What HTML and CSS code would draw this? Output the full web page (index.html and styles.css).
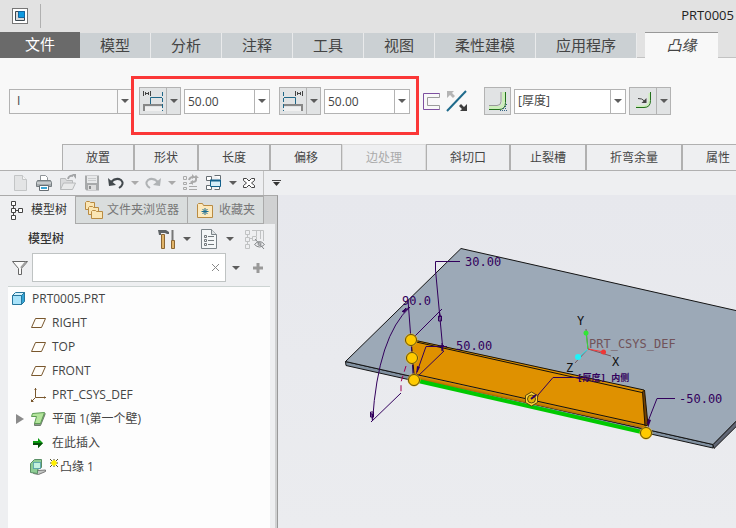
FILE: index.html
```html
<!DOCTYPE html>
<html lang="zh-CN">
<head>
<meta charset="utf-8">
<title>PRT0005</title>
<link rel="stylesheet" href="styles.css">
</head>
<body>
<header class="titlebar">
  <button class="app-btn" aria-label="窗口">
    <svg width="16" height="16" viewBox="0 0 16 16"><path d="M3.5 3.5h9v9h-9z" fill="#d8dadb" stroke="#3c4850"/><path d="M6.500 3.500h6v6h-6z" fill="#0d9ae0" stroke="#1465a0"/></svg>
  </button>
  <span class="title-sep"></span>
  <span class="doc-title">PRT0005</span>
</header>

<nav class="tabs">
  <button class="tab file">文件</button>
  <button class="tab">模型</button>
  <button class="tab">分析</button>
  <button class="tab">注释</button>
  <button class="tab">工具</button>
  <button class="tab">视图</button>
  <button class="tab wide">柔性建模</button>
  <button class="tab wide">应用程序</button>
  <span class="tab-gap"></span>
  <button class="tab active">凸缘</button>
  <span class="tab-rest"></span>
</nav>

<section class="ribbon">
  <div class="controls">
    <div class="combo profile"><select aria-label="轮廓"><option>I</option></select><i class="caret"></i></div>
    <div class="ends">
      <div class="field">
        <div class="split">
          <button aria-label="第一端"><svg width="26" height="26" viewBox="0 0 26 26"><path d="M3.500 3v5M10.500 3v5M5 5.500h4M5.500 4v3M8.500 4v3" stroke="#444" fill="none"/><path d="M22 9.500H10.500V16" stroke="#1f6788" fill="none"/><path d="M22.500 4v19" stroke="#1f6788" stroke-dasharray="4 2"/><path d="M5 19h17v4H5z" fill="#f0f0f0"/><path d="M4 23v-6h18" stroke="#878787" stroke-width="2" fill="none"/></svg></button>
          <button class="more" aria-label="更多"><i class="caret"></i></button>
        </div>
        <div class="combo num"><input aria-label="第一端值" value="50.00"><button aria-label="选择"><i class="caret"></i></button></div>
      </div>
      <div class="field">
        <div class="split">
          <button aria-label="第二端"><svg width="26" height="26" viewBox="0 0 26 26"><path d="M15.500 3v5M22.500 3v5M17 5.500h4M17.500 4v3M20.500 4v3" stroke="#444" fill="none"/><path d="M4 9.500h11.500V16" stroke="#1f6788" fill="none"/><path d="M3.500 4v19" stroke="#1f6788" stroke-dasharray="4 2"/><path d="M4 19h17v4H4z" fill="#f0f0f0"/><path d="M4 17h18v6" stroke="#878787" stroke-width="2" fill="none"/></svg></button>
          <button class="more" aria-label="更多"><i class="caret"></i></button>
        </div>
        <div class="combo num"><input aria-label="第二端值" value="50.00"><button aria-label="选择"><i class="caret"></i></button></div>
      </div>
    </div>
    <div class="icons">
      <button class="plain" aria-label="偏移边"><svg width="18" height="20" viewBox="0 0 18 20"><path d="M16.500 4V2.500H.5v16h16V17" fill="none" stroke="#7d50a0"/><path d="M16.500 3v3.500H4.500v8h12V18" fill="none" stroke="#9b9b9b"/></svg></button>
      <button class="plain" aria-label="反向"><svg width="22" height="22" viewBox="0 0 22 22"><path d="M1 21L20 1" stroke="#1f6b8c" stroke-width="2"/><path d="M1 1h7L6 3l3 3-2 2-3-3-3 3z" fill="#b5b5b5"/><path d="M21 21h-7l2-2-3-3 2-2 3 3 3-3z" fill="#3e3e3e"/></svg></button>
    </div>
    <button class="square" aria-label="厚度侧"><svg width="26" height="26" viewBox="0 0 26 26"><path d="M4 17.500h8q4 0 4-4V4" stroke="#999" fill="none"/><path d="M4 19.500h9q5.500 0 5.500-6V4" stroke="#cdeebb" stroke-width="3" fill="none"/><path d="M4 21.500h10q6.500 0 6.500-7V4" stroke="#23701c" fill="none"/><path d="M15 22.500h7M18 20.500h4M20 18.500h2M21 16.500h1" stroke="#356485" stroke-dasharray="1 1"/></svg></button>
    <div class="combo thick"><select aria-label="厚度"><option>[厚度]</option></select><i class="caret"></i></div>
    <div class="split">
      <button aria-label="折弯半径"><svg width="26" height="26" viewBox="0 0 26 26"><path d="M6 18.500h7q6.500 0 6.500-7V5" stroke="#cdeebb" stroke-width="2" fill="none"/><path d="M6 19.500h8q6.500 0 6.500-7V4" stroke="#23701c" fill="none"/><path d="M8 10.500q4-.5 7 3" stroke="#444" fill="none"/><path d="M16.500 10v5h-5z" fill="#444"/></svg></button>
      <button class="more" aria-label="更多"><i class="caret"></i></button>
    </div>
  </div>
  <nav class="panels">
    <button class="w72">放置</button><button class="w64">形状</button><button class="w72">长度</button><button class="w72">偏移</button><button class="w84" disabled>边处理</button><button class="w84">斜切口</button><button class="w76">止裂槽</button><button class="w96">折弯余量</button><button class="w72">属性</button>
  </nav>
</section>

<div class="quickbar">
  <button aria-label="新建"><svg width="18" height="18" viewBox="0 0 18 18"><path d="M3.500 1.500h8l4 4v11h-12z" fill="#e3e4e5" stroke="#c3c5c6"/><path d="M11.500 1.500v4h4" fill="#f5f5f5" stroke="#c3c5c6"/></svg></button>
  <button aria-label="打印"><svg width="18" height="18" viewBox="0 0 18 18"><path d="M5.500 6V1.500h5l2 2V6" fill="#fff" stroke="#8f9498"/><path d="M2.500 6.500h13l1 2v4h-15v-4z" fill="#a5abae" stroke="#777e82"/><path d="M2 9h14" stroke="#e7e9ea"/><path d="M4.500 11.500h9v5h-9z" fill="#fff" stroke="#666d73"/><path d="M6 13h6v2H6z" fill="#3ba4d3"/></svg></button>
  <button aria-label="打开"><svg width="18" height="18" viewBox="0 0 18 18"><path d="M1.500 15.500v-11h5l1 2h6v3" fill="#d9dadb" stroke="#b8babb"/><path d="M1.500 15.500l3-6.500h12l-3 6.500z" fill="#e8e9e9" stroke="#b8babb"/><path d="M9 5q1-4 5-3" stroke="#a2a4a6" stroke-width="2" fill="none"/><path d="M13 0h4v5z" fill="#a2a4a6"/></svg></button>
  <button aria-label="保存"><svg width="18" height="18" viewBox="0 0 18 18"><path d="M2 1.500h14v15H3.500L2 15z" fill="#a8aaab"/><path d="M4 2h10v7H4z" fill="#e8e9ea"/><path d="M5 11h8v5H5z" fill="#ddd"/><path d="M6 12h2v3H6z" fill="#8b8d8e"/><path d="M5 4.500h8M5 6.500h8" stroke="#c9cbcc"/></svg></button>
  <button aria-label="撤销"><svg width="18" height="18" viewBox="0 0 18 18"><path d="M4 8q5-5 10-2 4 4-2 8" stroke="#43494d" stroke-width="2" fill="none"/><path d="M1 4l1 8 7-1z" fill="#43494d"/></svg></button>
  <button class="drop" aria-label="撤销列表"><i class="caret dim"></i></button>
  <button aria-label="重做"><svg width="18" height="18" viewBox="0 0 18 18"><path d="M14 8q-5-5-10-2-4 4 2 8" stroke="#b0b3b5" stroke-width="2" fill="none"/><path d="M17 4l-1 8-7-1z" fill="#b0b3b5"/></svg></button>
  <button class="drop" aria-label="重做列表"><i class="caret dim"></i></button>
  <button aria-label="重新生成"><svg width="18" height="18" viewBox="0 0 18 18" fill="none" stroke="#aaa"><path d="M2.500 2.500h3v3h-3zM2.500 8.500h3v2h-3zM2.500 13.500h3v2h-3zM8 12.500h8M8 15.500h8M8 9.500h3"/><path d="M8 6q1-3 4-3M15 3v3q0 2-4 2" stroke-width="2"/><path d="M11 0l3 3-3 2zM12 6v5l-3-3zM12 4l3-3 3 3z" fill="#aaa" stroke="none"/></svg></button>
  <button aria-label="窗口"><svg width="18" height="18" viewBox="0 0 18 18"><path d="M1.500 2.500h5v4h-5zM9.500 1.500h6v4M1.500 11.500h5v4h-5zM9.500 15.500h5v-3" fill="#fff" stroke="#666d72"/><path d="M5.500 6.500h10v6h-10z" fill="#d5edf8" stroke="#13618c"/><path d="M5 6.500h11" stroke="#13618c" stroke-width="2"/></svg></button>
  <button class="drop" aria-label="窗口列表"><i class="caret"></i></button>
  <button aria-label="关闭"><svg width="14" height="14" viewBox="0 0 14 14"><path d="M1.500 2.500h3L7 5l2.500-2.500h3v2L9.500 7l3 2.500v2h-3L7 9l-2.500 2.500h-3v-2l3-2.500-3-2.500z" fill="#fff" stroke="#444"/></svg></button>
  <span class="bar-sep"></span>
  <button class="drop" aria-label="自定义"><svg width="9" height="7" viewBox="0 0 9 7"><path d="M0 .5h9" stroke="#444"/><path d="M1 2h7L4.500 6z" fill="#333"/></svg></button>
</div>

<main class="work">
  <aside class="side">
    <nav class="side-tabs">
      <button class="side-tab on"><svg width="14" height="20" viewBox="0 0 14 20" fill="#fff" stroke="#444"><path d="M1.500 1.500h4v4h-4zM1.500 8.500h4v4h-4zM1.500 15.500h4v4h-4zM8.500 8.500h4v4h-4zM3.500 5.500v3M3.500 12.500v3M5.500 10.500h3"/></svg>模型树</button>
      <button class="side-tab files"><svg width="20" height="20" viewBox="0 0 20 20" fill="#fbe6b4" stroke="#b98b42"><path d="M1.500 9.500v-7l1-1h3l1 1h4v7z"/><path d="M4.500 14.500v-7l1-1h3l1 1h5v7z"/><path d="M7.500 18.500v-7l1-1h3l1 1h6v7z"/></svg>文件夹浏览器</button>
      <button class="side-tab fav"><svg width="18" height="16" viewBox="0 0 18 16"><path d="M1.500 15.500v-13l1-1h4l1 2h9v12z" fill="#fce9bd" stroke="#b98b42"/><path d="M9 6v7M5.500 9.500h7M6.500 7l5 5M11.500 7l-5 5" stroke="#1a6c91"/></svg>收藏夹</button>
    </nav>
    <div class="side-body">
      <div class="tree-head">
        <h2>模型树</h2>
        <button aria-label="设置"><svg width="18" height="20" viewBox="0 0 18 20"><path d="M0 1h8l3 2v2H9L7 4H3v2H1z" fill="#5e6366"/><path d="M3.500 5.500h3v14h-3z" fill="#e0b469" stroke="#8b6633"/><path d="M14.500 1v10" stroke="#777" stroke-width="2"/><path d="M13.500 11.500h3v8h-3z" fill="#e0b469" stroke="#8b6633"/></svg></button>
        <button class="drop" aria-label="设置列表"><i class="caret"></i></button>
        <button aria-label="显示"><svg width="18" height="20" viewBox="0 0 18 20"><path d="M.5 .5h10l5 5v14H.5z" fill="#f4f7f8" stroke="#7b8489"/><path d="M10.500 .5v5h5" fill="#dde1e3" stroke="#7b8489"/><path d="M3.500 6.500h2v2h-2zM3.500 10.500h2v2h-2zM3.500 14.500h2v2h-2zM7 7.500h6M7 11.500h6M7 15.500h6" fill="none" stroke="#72797d"/></svg></button>
        <button class="drop" aria-label="显示列表"><i class="caret"></i></button>
        <button aria-label="隐藏"><svg width="22" height="20" viewBox="0 0 22 20" fill="none" stroke="#c0c2c3"><path d="M1.500 1.500h4v4h-4zM1.500 8.500h4v4h-4zM1.500 15.500h4v4h-4zM8.500 7.500h4v4h-4zM3.500 5.500v3M3.500 12.500v3M5.500 9.500h3M8 1.500h11.500V12M12.500 2v5M16.500 2v8"/><path d="M10.500 15.500q5-6 10 0-5 5-10 0zM11 10l9 10" stroke="#85888a"/><circle cx="15.500" cy="15" r="1.500" stroke="#85888a"/></svg></button>
      </div>
      <div class="search">
        <button aria-label="过滤"><svg width="18" height="16" viewBox="0 0 18 16"><path d="M1.500 1.500h15l-6 7v6h-3v-6z" fill="#fafafa" stroke="#666"/><path d="M10 8l5-6" stroke="#a0a0a0" stroke-width="2"/></svg></button>
        <div class="search-box"><input aria-label="搜索"><button aria-label="清除"><svg width="9" height="9" viewBox="0 0 9 9"><path d="M1 1l7 7M8 1L1 8" stroke="#888"/></svg></button></div>
        <button class="drop" aria-label="搜索选项"><i class="caret"></i></button>
        <button aria-label="添加"><svg width="12" height="12" viewBox="0 0 12 12"><path d="M6 1v10M1 6h10" stroke="#999" stroke-width="3"/></svg></button>
      </div>
      <ul class="tree">
        <li class="root"><svg width="16" height="16" viewBox="0 0 16 16"><path d="M1.500 4.500h9v9h-9z" fill="#a9e3fa" stroke="#28779d"/><path d="M1.500 4.500l3-3h9l-3 3z" fill="#d5f3fd" stroke="#28779d"/><path d="M10.500 4.500l3-3v9l-3 3z" fill="#35a5d6" stroke="#28779d"/></svg>PRT0005.PRT</li>
        <li><svg width="16" height="16" viewBox="0 0 16 16"><path d="M5.500 3.500h10l-4 9h-10z" fill="#fffdf9" stroke="#79572d"/></svg>RIGHT</li>
        <li><svg width="16" height="16" viewBox="0 0 16 16"><path d="M5.500 3.500h10l-4 9h-10z" fill="#fffdf9" stroke="#79572d"/></svg>TOP</li>
        <li><svg width="16" height="16" viewBox="0 0 16 16"><path d="M5.500 3.500h10l-4 9h-10z" fill="#fffdf9" stroke="#79572d"/></svg>FRONT</li>
        <li><svg width="16" height="16" viewBox="0 0 16 16"><path d="M5.500 1v9.500H16M5.500 10.500L1 15M4.500 2.500h2M14.500 9.500v2M1.500 12.500v2h2" fill="none" stroke="#79572d"/></svg>PRT_CSYS_DEF</li>
        <li class="branch"><button class="expand" aria-label="展开"></button><svg width="16" height="16" viewBox="0 0 16 16"><path d="M4.500 12v2.500h6l4.500-11V2" fill="#8d9a8c" stroke="#6f7d6e"/><path d="M1.500 5.500l1-3 12-1-4 11h-6l2-7z" fill="#b3e49b" stroke="#5d9d55"/></svg>平面 1(第一个壁)</li>
        <li><svg width="16" height="16" viewBox="0 0 16 16"><path d="M3 6h5V3l5 5-5 5v-3H3z" fill="#0a9a10"/><path d="M3 8h10l-5 5v-3H3z" fill="#064d09"/></svg>在此插入</li>
        <li class="fresh"><svg width="16" height="16" viewBox="0 0 16 16"><path d="M3 10.500l5 1 7.500-.5v1.500l-7 3-5-1z" fill="#c4c7c4" stroke="#777"/><path d="M.5 4.500l4-4h7v8l-4 2v4l-7-1z" fill="#8fce95" stroke="#5a8f66"/><path d="M3.500 3.500h7v6h-7z" fill="#c4f2df" stroke="#1a75a2" stroke-dasharray="1 1"/></svg><span class="new"><svg width="8" height="8" viewBox="0 0 8 8"><path d="M0 0l8 8M8 0L0 8M4 0v8M0 4h8" stroke="#55512a"/><path d="M1 4h6M4 1v6M2 2l4 4M6 2L2 6" stroke="#ffef00" stroke-width="1.500"/></svg></span>凸缘 1</li>
      </ul>
    </div>
  </aside>

  <section class="view">
    <svg class="scene" viewBox="278 195 458 333" preserveAspectRatio="xMinYMin slice" role="img" aria-label="凸缘模型">
      <defs>
        <linearGradient id="bend" gradientUnits="userSpaceOnUse" x1="530" y1="400" x2="528.700" y2="406"><stop offset="0" stop-color="#df9100"/><stop offset="1" stop-color="#8a4f05"/></linearGradient>
        <g id="grip"><circle r="6" fill="#f0be22" stroke="#f0be22"/><circle r="5.500" fill="#ffca00" stroke="#5d4c10"/></g>
      </defs>
      <g stroke="#151515" stroke-width="1" stroke-linejoin="round">
        <path d="M345.500 361.500L713 444.500V448L346 365.500z" fill="#8090a0"/>
        <path d="M713 444.500L760 397V403L714 448.500z" fill="#606674"/>
        <path d="M461 248.500L780 320.500 760 397 713 444.500 345.500 361.500z" fill="#9ca9b7"/>
      </g>
      <path d="M414 374.500L646 425l1 4-232-50z" fill="url(#bend)"/>
      <path d="M411 339L644 390l1 35-231-51z" fill="#df9100"/>
      <path d="M642.500 392l2-2 3.500 35-3 1z" fill="#734305" stroke="#221400"/>
      <path d="M411 339.500L644 390M414 341.500L642 392.500M414 374L645 425M411 339l3 35" fill="none" stroke="#15110a"/>
      <path d="M416 380.500L646 433" stroke="#00c900" stroke-width="4"/>
      <g fill="none" stroke="#32005c">
        <path d="M460 261.500H435.500V270L443 351M412 339l30-30M416 378l28-27M410 307Q378 336 372.500 421M371 422l30-29M408 300l3 40 2 34M447 346.500H426L417 372M538 395l15-17.500h33M647 424l10-25.500h18"/>
        <path d="M438.500 316h3v5h-3zM370.500 412h3v5h-3zM402 312l4-4M442 343v8M439 346h5"/>
      </g>
      <path d="M439 317l1-5 1 5zM442 352l-1-7h3zM371 413l1 8 2-7zM409 307l-7 4 2 2zM416 375l1-9 3 1zM648 428l0-9 3 1zM533 399l3-5 3 2z" fill="#32005c"/>
      <path d="M406 366l-5 16v12" stroke="#a00055" stroke-dasharray="6 4" fill="none"/>
      <use href="#grip" x="411" y="340"/><use href="#grip" x="412" y="358"/><use href="#grip" x="414" y="380"/><use href="#grip" x="646" y="433"/>
      <path d="M531.500 392l6 3.500v7l-6 3.500-6-3.500v-7z" fill="#ffd43a" stroke="#594710"/><circle cx="531.500" cy="399" r="4" fill="#e5b300" stroke="#594710"/><path d="M531 399l5-4" stroke="#32005c" stroke-width="2"/>
      <path d="M588 349l-2-20M588 349l23 7M588 349l-13 14" stroke="#76575d"/>
      <path d="M588 349l-2-16" stroke="#34df38"/><path d="M588 349l16 3" stroke="#ff3535"/><path d="M588 349l-9 8" stroke="#25e9ef"/>
      <circle cx="586" cy="333" r="2.500" fill="#31e635"/><circle cx="603.500" cy="352" r="2.500" fill="#ef3737"/><circle cx="578" cy="357" r="3" fill="#20f3f8"/>
      <g class="dims"><text x="465" y="266">30.00</text><text x="402" y="305">90.0</text><text x="456" y="350">50.00</text><text x="679" y="403">-50.00</text></g>
      <g class="note"><text x="577" y="381">[厚度] 内侧</text></g>
      <text class="csys" x="589" y="348">PRT_CSYS_DEF</text>
      <g class="axes"><text x="577" y="325">Y</text><text x="612" y="366">X</text><text x="566" y="372">Z</text></g>
    </svg>
  </section>
</main>
</body>
</html>
```
FILE: styles.css
```css
* { box-sizing: border-box; }
body {
  margin: 0;
  min-height: 100vh;
  display: flex;
  flex-direction: column;
  overflow: hidden;
  background: #eeeff1;
  color: #444;
  font: 12px/16px "Open Sans", "Noto Sans CJK SC", sans-serif;
}
button, input, select { font: inherit; color: inherit; }
button { border: 0; padding: 0; background: none; display: flex; align-items: center; justify-content: center; flex: none; white-space: nowrap; }
svg { display: block; flex: none; }

.caret { width: 0; height: 0; border: 4px solid transparent; border-top-color: #5c5c5c; border-bottom: 0; flex: none; }
.caret.dim { border-top-color: #aaa; }

.titlebar { display: flex; align-items: center; height: 32px; padding: 4px 2px 0 12px; background: #e2e2e2; }
.app-btn { width: 16px; height: 16px; margin-bottom: 4px; background: #fff; outline: 1px solid #777; outline-offset: -1px; }
.title-sep { width: 1px; height: 24px; margin: 0 0 4px 12px; background: #b0b0b0; }
.doc-title { margin: 0 0 6px auto; font-size: 13px; color: #222; }

.tabs { display: flex; height: 26px; background: #e2e2e2; }
.tab { width: 71px; margin-top: 1px; border-right: 1px solid #e9eaeb; background: #cbd0d3; font-size: 15px; line-height: 20px; padding-bottom: 2px; }
.tab.wide { width: 101px; }
.tab.file { width: 80px; margin-top: 0; border: 0; background: #6a6a6a; color: #fff; }
.tab.active { width: 73px; margin: 0; border: 0; border-top: 1px solid #999; background: #f8f8f8; font-style: italic; }
.tab-gap { width: 8px; border-bottom: 1px solid #c2c2c2; }
.tab-rest { flex: 1; border-bottom: 1px solid #c2c2c2; }

.ribbon { background: #f8f8f8; border-bottom: 1px solid #b0b0b0; }
.controls { display: flex; align-items: center; height: 86px; padding: 0 9px; gap: 3px; }
.combo { display: flex; align-items: center; height: 25px; border: 1px solid #b3b3b3; background: #fff; position: relative; flex: none; }
.combo select, .combo input { appearance: none; border: 0; outline: 0; background: none; width: 100%; height: 100%; min-width: 0; padding: 0 3px; border-radius: 0; }
.combo button { width: 15px; height: 100%; border-left: 1px solid #b3b3b3; }
.combo > .caret { margin: 0 3px; }
.combo select { border-right: 1px solid #b3b3b3; }
.profile { width: 124px; background: #f8f8f8; }
.profile select { padding-left: 7px; }
.num { width: 86px; }
.thick { width: 112px; }
.ends { position: relative; display: flex; gap: 9px; padding: 0 13px 0 3px; }
.ends::after { content: ""; position: absolute; inset: -11px 4px -20px -5px; border: 3px solid #fb3737; pointer-events: none; }
.field { display: flex; align-items: center; gap: 3px; }
.split { display: flex; height: 28px; width: 42px; border: 1px solid #b3b3b3; background: #e1e3e4; flex: none; }
.split button { width: 26px; }
.split .more { width: 14px; border-left: 1px solid #b3b3b3; }
.icons { display: flex; align-items: center; gap: 5px; width: 58px; margin-left: -3px; }
.square { width: 27px; height: 28px; border: 1px solid #b3b3b3; background: #e1e3e4; }

.panels { display: flex; margin-left: 62px; height: 26px; overflow: hidden; }
.panels button { height: 27px; border: 1px solid #b0b0b0; border-width: 1px 1px 0; background: #eeeff1; }
.panels button:disabled { color: #aaa; border-color: #dcdcdc; }
.w64 { width: 64px; } .w72 { width: 72px; } .w76 { width: 76px; } .w84 { width: 84px; } .w96 { width: 96px; }

.quickbar { display: flex; align-items: center; height: 24px; padding-left: 11px; gap: 6px; background: #eeeff1; }
.quickbar .drop { width: 9px; margin: 0 -1px; }
.bar-sep { width: 1px; height: 100%; margin: 0 3px 0 1px; background: #c2c2c2; }

.work { flex: 1; display: flex; min-height: 0; }
.side { width: 278px; flex: none; display: flex; flex-direction: column; border-top: 1px solid #aaa; border-right: 1px solid #999; background: #d0d1d2; }
.side-tabs { display: flex; height: 28px; }
.side-tab { justify-content: flex-start; gap: 5px; background: #d9dddd; border: 1px solid #aaa; border-width: 1px 1px 1px 0; color: #777; padding-left: 8px; }
.side-tab.on { width: 76px; gap: 7px; padding-left: 10px; background: #eeeff1; border-width: 0 1px 0 0; color: #333; }
.files { width: 112px; gap: 3px; }
.fav { width: 76px; }
.side-body { flex: 1; display: flex; flex-direction: column; margin-right: 2px; padding: 0 5px 0 8px; background: #eeeff1; }
.tree-head { display: flex; align-items: center; height: 29px; gap: 7px; padding: 0 4px 0 20px; }
.tree-head h2 { margin: 0 auto 0 0; font-size: 12px; font-weight: 500; color: #333; }
.tree-head .drop { margin-right: 3px; }
.search { display: flex; align-items: center; gap: 6px; padding-left: 3px; }
.search > button:first-child { margin-right: -3px; }
.search-box { display: flex; flex: 1; height: 29px; border: 1px solid #bfc3c3; background: #fff; padding-right: 5px; }
.search-box input { flex: 1; min-width: 0; border: 0; outline: 0; background: none; }
.search > button:last-child { margin: 0 6px; }
.tree { list-style: none; flex: 1; margin: 4px 0 0; padding: 0 0 10px; background: #fdfdfd; border-top: 1px solid #ccd3d2; }
.tree li { position: relative; display: flex; align-items: center; height: 24px; gap: 6px; padding-left: 22px; }
.tree .root { padding-left: 3px; gap: 5px; }
.tree .branch { padding-left: 8px; }
.expand { width: 8px; height: 10px; background: #8b8b8b; clip-path: polygon(0 0, 100% 50%, 0 100%); }
.tree .fresh { gap: 4px; }
.new { align-self: flex-start; padding-top: 4px; margin-right: -2px; }

.view { flex: 1; min-width: 0; background: linear-gradient(#e7e8ed, #ebecef); }
.scene { width: 100%; height: 100%; }
.scene text { font: 12px "DejaVu Sans Mono", "Noto Sans CJK SC", monospace; }
.dims { fill: #32005c; }
.scene .note text { font-size: 9px; font-weight: 700; fill: #32005c; }
.scene .csys { fill: #71535a; }
.axes { fill: #111; }
```
